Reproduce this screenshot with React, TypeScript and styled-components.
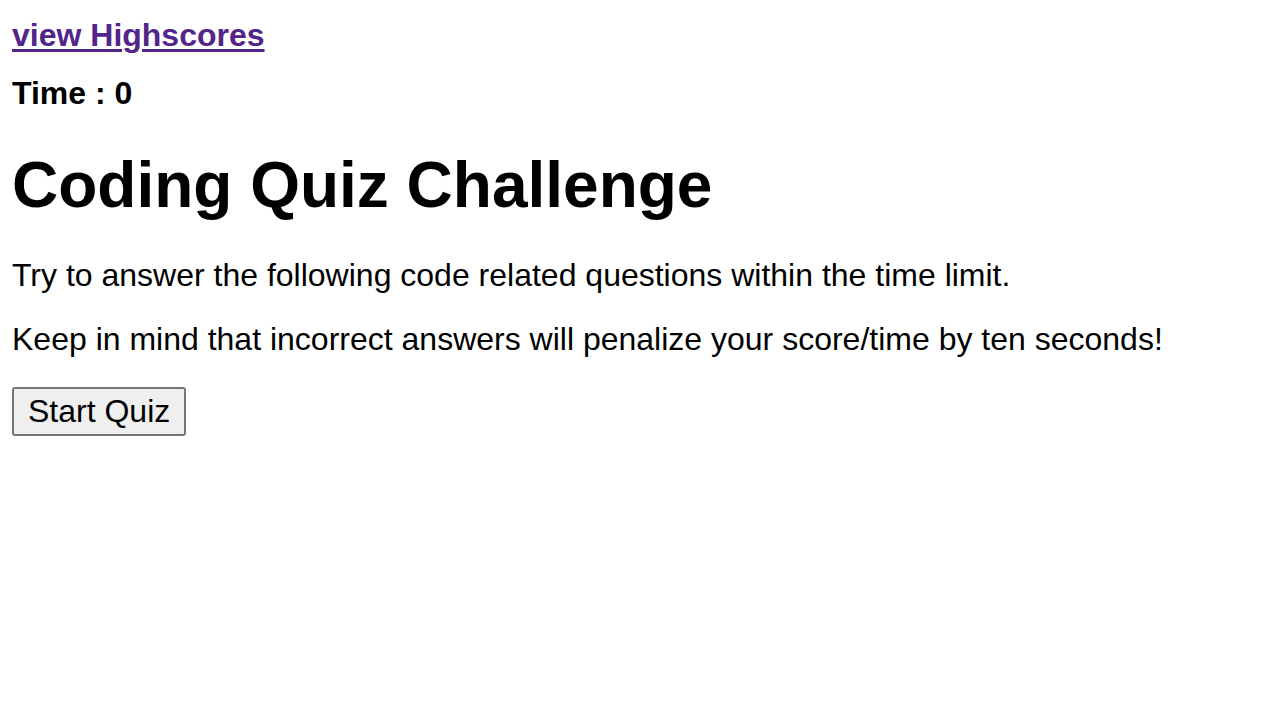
import React from "react";
import styled, { createGlobalStyle } from "styled-components";

const Global = createGlobalStyle`
  html, body { margin: 0; padding: 0; background: #ffffff; }
  body { font-family: "Liberation Sans", Arial, Helvetica, sans-serif; color: #000; }
`;

const Page = styled.main`
  display: flex;
  flex-direction: column;
  align-items: flex-start;
  padding: 12px;
`;

const Header = styled.header`
  display: flex;
  flex-direction: column;
  align-items: flex-start;
  margin-top: 5px;
  gap: 21px;
`;

const HighscoreLink = styled.a`
  font-size: 32px;
  line-height: 37px;
  font-weight: 700;
  color: #52258a;
  text-decoration: underline;
  text-underline-offset: 3px;
  text-decoration-thickness: 3px;
`;

const Timer = styled.div`
  font-size: 32px;
  line-height: 37px;
  font-weight: 700;
`;

const Title = styled.h1`
  margin: 36px 0 0;
  font-size: 64px;
  line-height: 74px;
  font-weight: 700;
`;

const Text = styled.p<{ $gap: number }>`
  margin: ${(p) => p.$gap}px 0 0;
  font-size: 32px;
  line-height: 37px;
`;

const StartButton = styled.button`
  margin-top: 29px;
  font-family: "Liberation Sans", Arial, sans-serif;
  font-size: 32px;
  line-height: 37px;
  padding: 4px 14px 4px;
  background: #efefef;
  border: 2px solid #767676;
  border-radius: 3px;
  color: #000;
  cursor: pointer;
`;

export default function App() {
  return (
    <>
      <Global />
      <Page>
        <Header>
          <HighscoreLink href="#">view Highscores</HighscoreLink>
          <Timer>Time : 0</Timer>
        </Header>
        <Title>Coding Quiz Challenge</Title>
        <Text $gap={35}>Try to answer the following code related questions within the time limit.</Text>
        <Text $gap={27}>Keep in mind that incorrect answers will penalize your score/time by ten seconds!</Text>
        <StartButton>Start Quiz</StartButton>
      </Page>
    </>
  );
}
